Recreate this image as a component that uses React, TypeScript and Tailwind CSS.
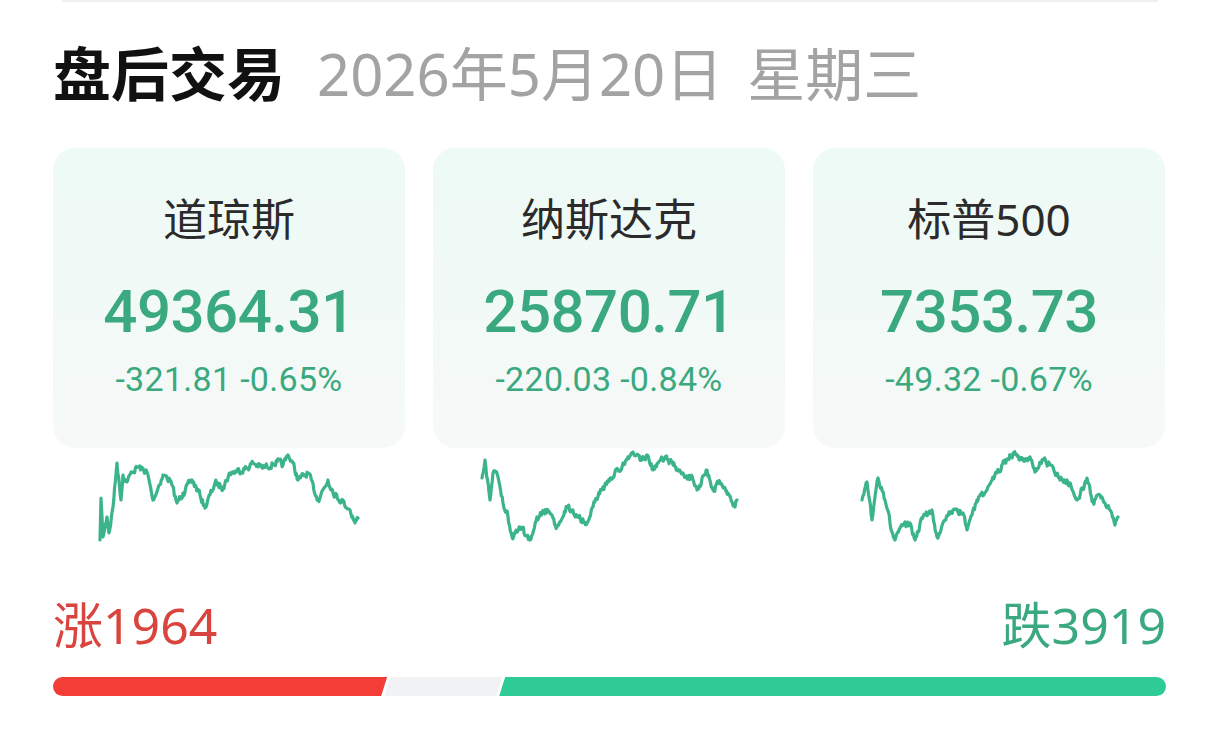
const FONT = "font-['Noto_Sans','Noto_Sans_CJK_SC',sans-serif]";
const NUM = "font-['Roboto','Noto_Sans_CJK_SC',sans-serif]";

type Pt = [number, number];

type Index = {
  name: string;
  value: string;
  change: string;
  seed: number;
  points: Pt[];
};

const indices: Index[] = [
  {
    name: "道琼斯",
    value: "49364.31",
    change: "-321.81 -0.65%",
    seed: 7,
    points: [
      [47, 92], [48, 50], [50, 89], [54, 69], [56, 85], [60, 59], [64, 15], [68, 52], [70, 27],
      [74, 34], [79, 24], [85, 19], [94, 24], [100, 52], [110, 27], [117, 32], [124, 55], [130, 45],
      [139, 32], [147, 47], [152, 60], [162, 35], [170, 39], [177, 25], [194, 20], [200, 15],
      [210, 20], [224, 14], [230, 17], [235, 7], [240, 15], [245, 32], [255, 25], [265, 52],
      [275, 32], [282, 47], [290, 54], [297, 62], [302, 75], [305, 70],
    ],
  },
  {
    name: "纳斯达克",
    value: "25870.71",
    change: "-220.03 -0.84%",
    seed: 21,
    points: [
      [49, 30], [52, 12], [57, 52], [60, 25], [65, 29], [70, 55], [75, 69], [79, 89], [87, 79],
      [97, 92], [104, 69], [115, 62], [124, 79], [134, 59], [144, 69], [154, 75], [160, 59],
      [170, 39], [180, 29], [190, 15], [200, 4], [207, 12], [214, 7], [220, 22], [232, 9],
      [240, 17], [250, 25], [260, 32], [264, 42], [274, 22], [280, 42], [287, 34], [295, 45],
      [302, 59], [304, 52],
    ],
  },
  {
    name: "标普500",
    value: "7353.73",
    change: "-49.32 -0.67%",
    seed: 42,
    points: [
      [49, 52], [54, 34], [59, 72], [65, 30], [72, 52], [77, 75], [82, 92], [87, 80], [97, 75],
      [102, 92], [110, 69], [119, 62], [124, 89], [132, 72], [140, 62], [150, 65], [154, 82],
      [164, 52], [174, 42], [184, 25], [192, 12], [200, 5], [207, 12], [217, 9], [222, 24],
      [230, 12], [240, 19], [247, 32], [254, 32], [264, 52], [274, 30], [280, 54], [287, 47],
      [297, 62], [302, 77], [305, 69],
    ],
  },
];

function linePath(points: Pt[], seed: number) {
  let s = seed;
  const rand = () => {
    s = (s * 16807) % 2147483647;
    return s / 2147483647;
  };
  let n = 0;
  const out: string[] = [];
  for (let i = 0; i < points.length - 1; i++) {
    const [x0, y0] = points[i];
    const [x1, y1] = points[i + 1];
    const steps = Math.max(1, Math.round(Math.abs(x1 - x0) * 1.2));
    for (let k = 0; k < steps; k++) {
      const t = k / steps;
      n = n * 0.4 + (rand() - 0.5) * 6;
      const x = x0 + (x1 - x0) * t;
      const y = y0 + (y1 - y0) * t + (k === 0 ? 0 : n);
      out.push(`${out.length ? "L" : "M"}${x.toFixed(2)} ${Math.max(2, Math.min(98, y)).toFixed(2)}`);
    }
  }
  const last = points[points.length - 1];
  out.push(`L${last[0]} ${last[1]}`);
  return out.join(" ");
}

function IndexCard({ item }: { item: Index }) {
  return (
    <div className="flex w-[352px] flex-col">
      <div className="flex h-[300px] flex-col items-center rounded-[22px] bg-gradient-to-b from-[#edfaf5] to-[#f6f9f8] pt-[49px]">
        <div className={`${FONT} text-[44px] leading-none text-[#2b2b2b]`}>{item.name}</div>
        <div className={`${NUM} mt-[41px] text-[60px] font-medium leading-none tracking-[-0.5px] text-[#3aa97f]`}>
          {item.value}
        </div>
        <div className={`${NUM} mt-[20px] text-[34px] leading-none tracking-[0.3px] text-[#3aa97f]`}>
          {item.change}
        </div>
      </div>
      <svg width="352" height="100" viewBox="0 0 352 100" className="block">
        <path
          d={linePath(item.points, item.seed)}
          fill="none"
          stroke="#3cb489"
          strokeWidth="3.2"
          strokeLinejoin="round"
          strokeLinecap="round"
        />
      </svg>
    </div>
  );
}

export default function App() {
  return (
    <div className={`${FONT} h-[730px] w-[1216px] overflow-hidden bg-white`}>
      <div className="ml-[62px] h-[2px] w-[1096px] bg-[#f0f0f0]" />

      <div className="flex items-center px-[53px] pt-[43px]">
        <h1 className="text-[58px] font-bold leading-none text-[#111]">盘后交易</h1>
        <span className="ml-[32px] text-[58px] leading-none text-[#a3a3a3]">2026年5月20日</span>
        <span className="ml-[24px] text-[58px] leading-none text-[#a3a3a3]">星期三</span>
      </div>

      <div className="mt-[45px] flex gap-[28px] px-[53px]">
        {indices.map((item) => (
          <IndexCard key={item.name} item={item} />
        ))}
      </div>

      <div className="mt-[52px] flex items-center justify-between pl-[53px] pr-[50px]">
        <div className="text-[50px] leading-none text-[#d9443e]">涨1964</div>
        <div className="text-[50px] leading-none text-[#3aa97f]">跌3919</div>
      </div>

      <div className="ml-[53px] mr-[50px] mt-[27px] flex h-[19px]">
        <div className="grow-[1964] rounded-l-full bg-[#f23e36] [clip-path:polygon(0_0,100%_0,calc(100%-6px)_100%,0_100%)]" />
        <div className="-ml-[3px] w-[118px] shrink-0 bg-[#f1f2f3] [clip-path:polygon(6px_0,100%_0,calc(100%-6px)_100%,0_100%)]" />
        <div className="-ml-[3px] grow-[3919] rounded-r-full bg-[#2ecb97] [clip-path:polygon(6px_0,100%_0,100%_100%,0_100%)]" />
      </div>
    </div>
  );
}
